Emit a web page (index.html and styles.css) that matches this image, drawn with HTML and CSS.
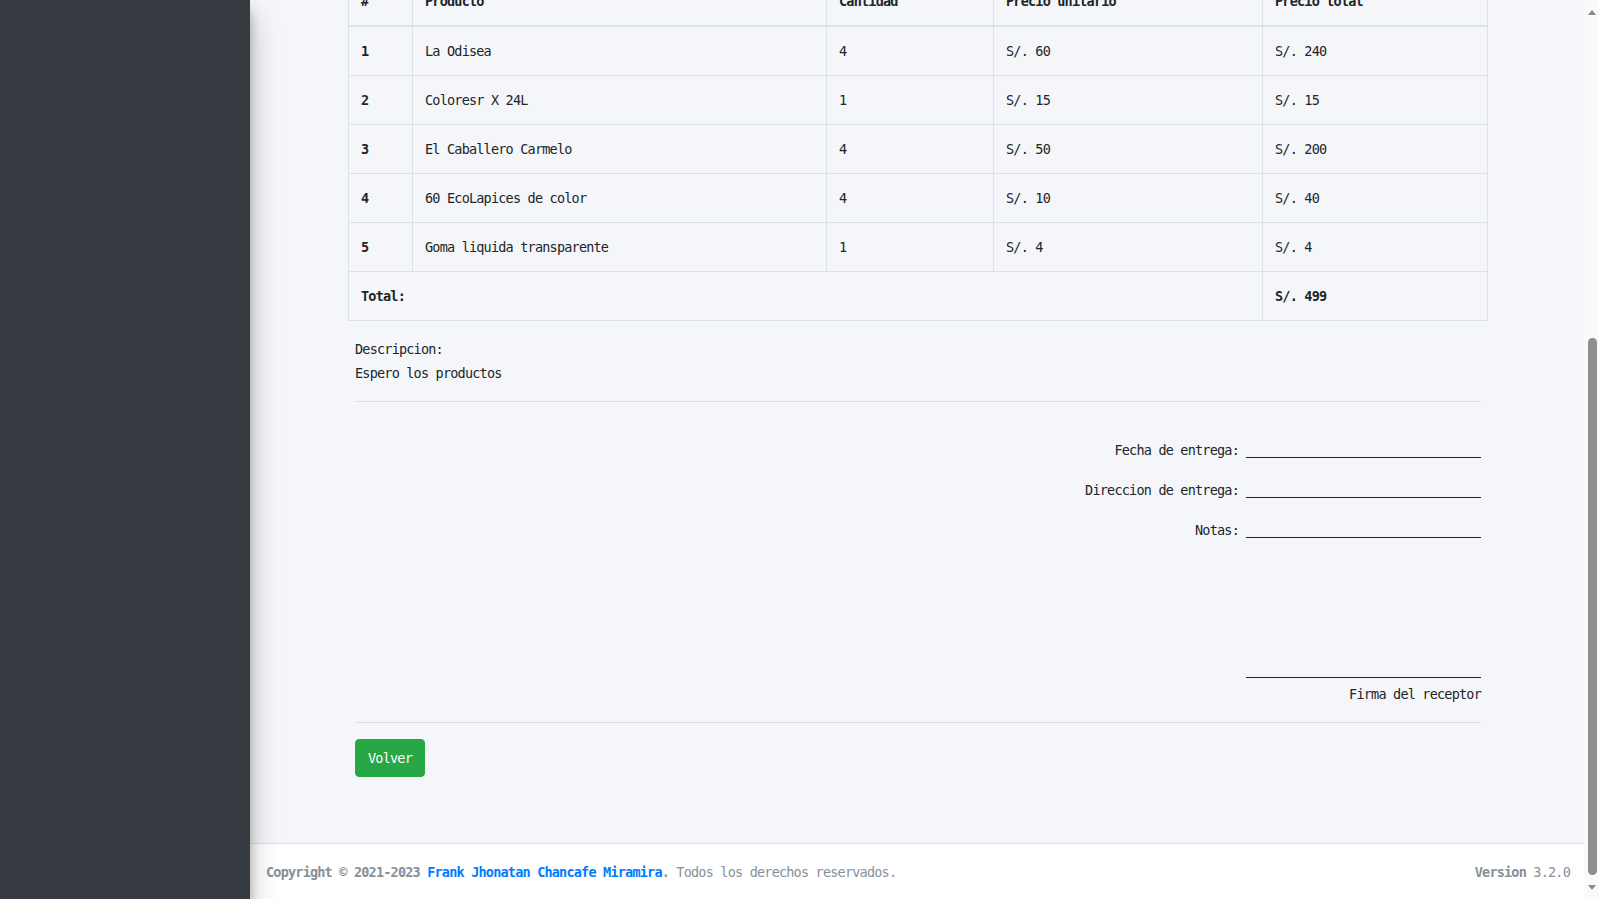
FILE: index.html
```html
<!DOCTYPE html>
<html lang="es">
<head>
<meta charset="utf-8">
<title>Pedido</title>
<link rel="stylesheet" href="styles.css">
</head>
<body>
<div class="app">
  <aside class="sidebar"></aside>
  <div class="main">
    <div class="content">
      <div class="invoice">
        <table class="table">
          <colgroup>
            <col class="c1"><col class="c2"><col class="c3"><col class="c4"><col class="c5">
          </colgroup>
          <thead>
            <tr><th>#</th><th>Producto</th><th>Cantidad</th><th>Precio unitario</th><th>Precio total</th></tr>
          </thead>
          <tbody>
            <tr><th>1</th><td>La Odisea</td><td>4</td><td>S/. 60</td><td>S/. 240</td></tr>
            <tr><th>2</th><td>Coloresr X 24L</td><td>1</td><td>S/. 15</td><td>S/. 15</td></tr>
            <tr><th>3</th><td>El Caballero Carmelo</td><td>4</td><td>S/. 50</td><td>S/. 200</td></tr>
            <tr><th>4</th><td>60 EcoLapices de color</td><td>4</td><td>S/. 10</td><td>S/. 40</td></tr>
            <tr><th>5</th><td>Goma liquida transparente</td><td>1</td><td>S/. 4</td><td>S/. 4</td></tr>
            <tr><th colspan="4">Total:</th><th>S/. 499</th></tr>
          </tbody>
        </table>
        <div class="body">
          <div class="desc">
            <div>Descripcion:</div>
            <div>Espero los productos</div>
          </div>
          <hr class="rule">
          <div class="fields">
            <div class="field"><span class="label">Fecha de entrega:</span><span class="blank"></span></div>
            <div class="field"><span class="label">Direccion de entrega:</span><span class="blank"></span></div>
            <div class="field"><span class="label">Notas:</span><span class="blank"></span></div>
          </div>
          <div class="signature">Firma del receptor</div>
          <hr class="rule">
          <button class="btn">Volver</button>
        </div>
      </div>
    </div>
    <footer class="footer">
      <div class="footer-left"><strong>Copyright &copy; 2021-2023 <a href="#">Frank Jhonatan Chancafe Miramira</a>.</strong> Todos los derechos reservados.</div>
      <div class="footer-right"><b>Version</b> 3.2.0</div>
    </footer>
  </div>
  <div class="scrollbar">
    <div class="arrow"><span class="tri up"></span></div>
    <div class="track"></div>
    <div class="thumb"></div>
    <div class="arrow"><span class="tri down"></span></div>
  </div>
</div>
</body>
</html>
```

FILE: styles.css
```css
* { box-sizing: border-box; }
html, body { margin: 0; padding: 0; height: 100%; }
body {
  font-family: "DejaVu Sans Mono", "Liberation Mono", monospace;
  font-size: 13.5px;
  letter-spacing: -0.8px;
  line-height: 24px;
  color: #212529;
  background: #f4f6f9;
  overflow: hidden;
}
.app { display: flex; height: 899px; }
.sidebar {
  width: 250px;
  flex: none;
  background: #343a40;
  position: relative;
  z-index: 2;
  box-shadow: 0 14px 28px rgba(0,0,0,.25), 0 10px 10px rgba(0,0,0,.22);
}
.main {
  flex: 1;
  display: flex;
  flex-direction: column;
  min-width: 0;
  background: #f4f6f9;
}
.content { flex: 1; overflow: hidden; }
.invoice { margin: -24px 97px 0 98px; }
.table {
  width: 1139px;
  border-collapse: collapse;
  table-layout: fixed;
  margin-bottom: 16px;
}
.c1 { width: 64px; } .c2 { width: 414px; } .c3 { width: 167px; } .c4 { width: 269px; } .c5 { width: 225px; }
.table th, .table td {
  border: 1px solid #dee2e6;
  padding: 12px;
  text-align: left;
  vertical-align: top;
  line-height: 24px;
}
.table th { font-weight: bold; }
.table td { font-weight: normal; }
.table thead th { border-bottom-width: 2px; }
.body { padding: 0 6px 0 7px; }
.desc { margin-bottom: 16px; }
.rule { border: 0; border-top: 1px solid rgba(0,0,0,.1); margin: 16px 0; height: 0; }
.fields { padding-top: 20px; }
.field { text-align: right; margin-bottom: 16px; }
.label { margin-right: 7px; }
.blank {
  display: inline-block;
  width: 235px;
  height: 0;
  border-bottom: 1px solid #212529;
  vertical-align: -3px;
}
.signature {
  width: 235px;
  margin: 135px 0 0 auto;
  border-top: 1px solid #212529;
  padding-top: 4px;
  text-align: right;
}
.btn {
  font: inherit;
  letter-spacing: inherit;
  color: #fff;
  background: #28a745;
  border: 1px solid #28a745;
  border-radius: 4px;
  padding: 6px 12px;
  line-height: 24px;
  display: inline-block;
}
.footer {
  flex: none;
  display: flex;
  justify-content: space-between;
  background: #fff;
  border-top: 1px solid #dee2e6;
  padding: 16px 14px 15px 16px;
  color: #869099;
}
.footer a { color: #007bff; text-decoration: none; }
.scrollbar {
  width: 15px;
  flex: none;
  background: #fafafa;
  display: flex;
  flex-direction: column;
}
.arrow { height: 24px; flex: none; display: flex; align-items: center; justify-content: center; }
.tri { width: 0; height: 0; border-left: 4px solid transparent; border-right: 4px solid transparent; }
.tri.up { border-bottom: 5px solid #8a8a8a; }
.tri.down { border-top: 5px solid #8a8a8a; }
.track { flex: 1; }
.thumb {
  flex: none;
  height: 537px;
  margin: 0 2px 0 4px;
  background: #8f8f8f;
  border-radius: 5px;
}
```
